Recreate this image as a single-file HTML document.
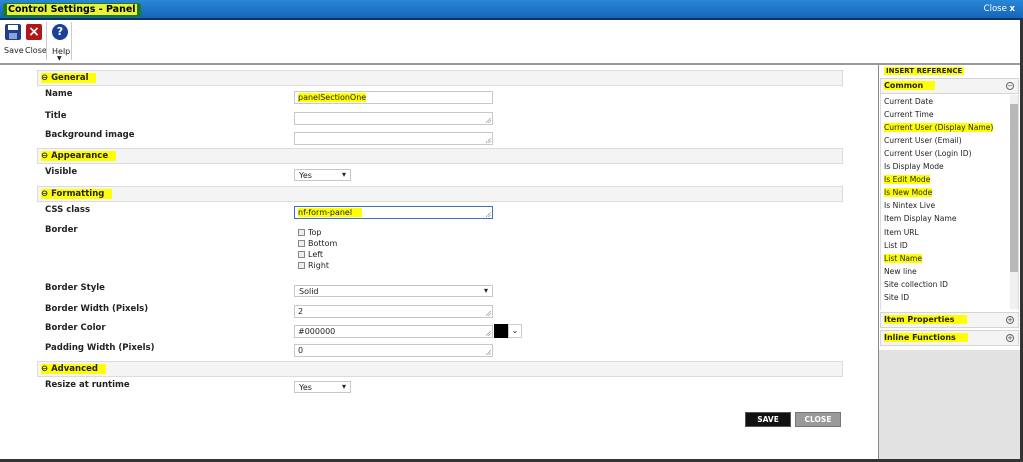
<!DOCTYPE html>
<html><head><meta charset="utf-8"><style>
*{box-sizing:border-box;margin:0;padding:0}
body{width:1023px;height:462px;position:relative;overflow:hidden;background:#fff;font-family:"DejaVu Sans","Liberation Sans",sans-serif;font-size:8px;color:#222}
.a{position:absolute}
.hl{background:#ffff00}
.title{left:0;top:0;width:1023px;height:20px;background:linear-gradient(#2a86d8,#1565b8);border-bottom:2px solid #0d2f6a}
.sec{left:37px;width:806px;height:16px;background:#f4f4f4;border:1px solid #dcdcdc}
.sec span{position:absolute;left:3px;top:2px;font-weight:bold;font-size:8.5px;padding:0 8px 0 0}
.lab{left:45px;font-weight:bold;font-size:8.5px}
.inp{left:294px;width:199px;height:13px;border:1px solid #c8c8c8;background:#fff;font-size:8px;padding:1px 3px}
.rz::after{content:"";position:absolute;right:1px;bottom:1px;width:5px;height:5px;background:linear-gradient(135deg,transparent 45%,#999 45%,#999 55%,transparent 55%,transparent 70%,#999 70%,#999 80%,transparent 80%)}
.sel{left:294px;height:12px;border:1px solid #c8c8c8;font-size:8px;padding:1px 4px}
.sel::after{content:"▾";position:absolute;right:4px;top:0;font-size:8px}
.cb{left:298px;font-size:8px}
.cb i{display:inline-block;width:7px;height:7px;border:1px solid #888;background:#eee;vertical-align:-1px;margin-right:3px}
.ri{left:884px;font-size:7.6px;color:#222}
.rh{left:880px;width:139px;height:16px;background:#f4f4f4;border:1px solid #d5d5d5}
.rh span{position:absolute;left:3px;top:2px;font-weight:bold;font-size:8px;padding-right:12px}
.circ{position:absolute;right:4px;top:3px;width:8px;height:8px;border:1px solid #666;border-radius:50%;font-size:7px;line-height:6px;text-align:center;color:#444}
</style></head><body>
<div class="a title"></div>
<div class="a" style="left:3px;top:3px;height:14px;background:#1e7a1e;border-radius:3px;padding:1px 4px;font-weight:bold;font-size:9.5px;color:#000"><span class="hl" style="background:#e8f23a;padding:0 1px">Control Settings - Panel</span></div>
<div class="a" style="right:8px;top:4px;color:#fff;font-size:8.5px">Close <b>x</b></div>
<!-- toolbar -->
<div class="a" style="left:5px;top:24px;width:16px;height:16px;background:#1f3e8c;border-radius:2px"><div style="position:absolute;left:3px;top:1px;width:10px;height:5px;background:#fff"></div><div style="position:absolute;left:4px;top:9px;width:8px;height:6px;background:#8aa2d6"></div></div>
<div class="a" style="left:26px;top:24px;width:16px;height:16px;background:#b01818;border-radius:2px;color:#fff;font-size:14px;line-height:16px;text-align:center;font-weight:bold">×</div>
<div class="a" style="left:4px;top:46px;font-size:8px">Save</div>
<div class="a" style="left:25px;top:46px;font-size:8px">Close</div>
<div class="a" style="left:46px;top:22px;width:1px;height:38px;background:#ccc"></div>
<div class="a" style="left:52px;top:24px;width:16px;height:16px;background:#1c3f9a;border-radius:50%;color:#fff;font-weight:bold;font-size:11px;line-height:16px;text-align:center">?</div>
<div class="a" style="left:52px;top:47px;font-size:8px">Help</div>
<div class="a" style="left:57px;top:55px;font-size:6px">▼</div>
<div class="a" style="left:71px;top:22px;width:1px;height:38px;background:#ccc"></div>
<div class="a" style="left:0;top:63px;width:1023px;height:2px;background:#9a9a9a"></div>
<!-- sections -->
<div class="a sec" style="top:70px"><span class="hl">⊖ General</span></div>
<div class="a lab" style="top:89px">Name</div>
<div class="a inp" style="top:91px"><span class="hl">panelSectionOne</span></div>
<div class="a lab" style="top:111px">Title</div>
<div class="a inp rz" style="top:112px"></div>
<div class="a lab" style="top:130px">Background image</div>
<div class="a inp rz" style="top:132px"></div>
<div class="a sec" style="top:148px"><span class="hl">⊖ Appearance</span></div>
<div class="a lab" style="top:167px">Visible</div>
<div class="a sel" style="top:169px;width:57px">Yes</div>
<div class="a sec" style="top:186px"><span class="hl">⊖ Formatting</span></div>
<div class="a lab" style="top:205px">CSS class</div>
<div class="a inp rz" style="top:206px;border:1px solid #3a6fc0"><span class="hl" style="padding-right:10px">nf-form-panel</span></div>
<div class="a lab" style="top:225px">Border</div>
<div class="a cb" style="top:228px"><i></i>Top</div>
<div class="a cb" style="top:239px"><i></i>Bottom</div>
<div class="a cb" style="top:250px"><i></i>Left</div>
<div class="a cb" style="top:261px"><i></i>Right</div>
<div class="a lab" style="top:283px">Border Style</div>
<div class="a sel" style="top:285px;width:199px">Solid</div>
<div class="a lab" style="top:304px">Border Width (Pixels)</div>
<div class="a inp rz" style="top:305px">2</div>
<div class="a lab" style="top:323px">Border Color</div>
<div class="a inp rz" style="top:325px">#000000</div>
<div class="a" style="left:494px;top:324px;width:14px;height:14px;background:#000"></div>
<div class="a" style="left:508px;top:324px;width:14px;height:14px;border:1px solid #ccc;text-align:center;font-size:8px;line-height:11px">⌄</div>
<div class="a lab" style="top:343px">Padding Width (Pixels)</div>
<div class="a inp rz" style="top:344px">0</div>
<div class="a sec" style="top:361px"><span class="hl">⊖ Advanced</span></div>
<div class="a lab" style="top:380px">Resize at runtime</div>
<div class="a sel" style="top:381px;width:57px">Yes</div>
<div class="a" style="left:745px;top:412px;width:46px;height:15px;background:#111;border:1px solid #555;color:#fff;font-weight:bold;font-size:7.5px;text-align:center;line-height:13px">SAVE</div>
<div class="a" style="left:795px;top:412px;width:46px;height:15px;background:#9a9a9a;border:1px solid #777;color:#fff;font-weight:bold;font-size:7.5px;text-align:center;line-height:13px">CLOSE</div>
<!-- right panel -->
<div class="a" style="left:878px;top:65px;width:1px;height:395px;background:#888"></div>
<div class="a" style="left:879px;top:350px;width:141px;height:110px;background:#e2e2e2"></div>
<div class="a" style="left:884px;top:67px;font-weight:bold;font-size:7px;background:#ffff00;padding:0 2px">INSERT REFERENCE</div>
<div class="a rh" style="top:78px"><span class="hl">Common</span><div class="circ">−</div></div>
<div class="a" style="left:880px;top:94px;width:139px;height:216px;border-left:1px solid #ddd;border-right:1px solid #ddd"></div>
<div class="a" style="left:1010px;top:95px;width:8px;height:214px;background:#f0f0f0"></div>
<div class="a" style="left:1010px;top:104px;width:8px;height:168px;background:#b8b8b8"></div>
<div class="a ri" style="top:97px">Current Date</div>
<div class="a ri" style="top:110px">Current Time</div>
<div class="a ri hl" style="top:123px">Current User (Display Name)</div>
<div class="a ri" style="top:136px">Current User (Email)</div>
<div class="a ri" style="top:149px">Current User (Login ID)</div>
<div class="a ri" style="top:162px">Is Display Mode</div>
<div class="a ri hl" style="top:175px">Is Edit Mode</div>
<div class="a ri hl" style="top:188px">Is New Mode</div>
<div class="a ri" style="top:201px">Is Nintex Live</div>
<div class="a ri" style="top:214px">Item Display Name</div>
<div class="a ri" style="top:228px">Item URL</div>
<div class="a ri" style="top:241px">List ID</div>
<div class="a ri hl" style="top:254px">List Name</div>
<div class="a ri" style="top:267px">New line</div>
<div class="a ri" style="top:280px">Site collection ID</div>
<div class="a ri" style="top:293px">Site ID</div>
<div class="a rh" style="top:312px"><span class="hl">Item Properties</span><div class="circ">+</div></div>
<div class="a rh" style="top:330px"><span class="hl">Inline Functions</span><div class="circ">+</div></div>
<div class="a" style="left:1020px;top:20px;width:3px;height:442px;background:#333"></div>
<div class="a" style="left:0;top:459px;width:1023px;height:3px;background:#333"></div>
</body></html>
